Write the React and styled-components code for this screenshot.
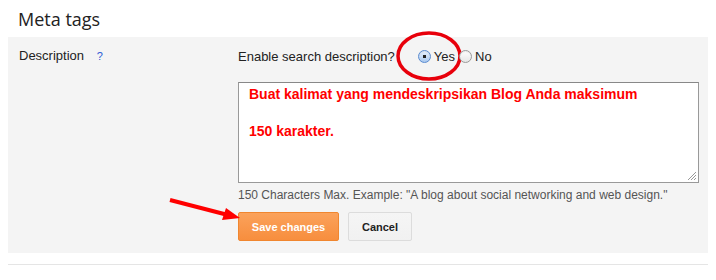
import React from 'react'
import styled, { createGlobalStyle } from 'styled-components'

const GlobalStyle = createGlobalStyle`
  body {
    margin: 0;
    background: #fff;
    font-family: "Liberation Sans", Arial, sans-serif;
  }
`

const App = () => {
    return (
        <Page>
            <GlobalStyle />
            <Title>Meta tags</Title>
            <Panel>
                <Label>
                    Description <Help>?</Help>
                </Label>
                <Field>
                    <Question>
                        <span>Enable search description?</span>
                        <Choice>
                            <Radio checked />
                            Yes
                            <Circle viewBox="0 0 68 52">
                                <ellipse cx="34" cy="26" rx="31" ry="23" fill="none" stroke="#e8000b" strokeWidth="3.5" />
                            </Circle>
                        </Choice>
                        <Choice>
                            <Radio />
                            No
                        </Choice>
                    </Question>
                    <TextBox>
                        <RedText>Buat kalimat yang mendeskripsikan Blog Anda maksimum</RedText>
                        <RedText />
                        <RedText>150 karakter.</RedText>
                        <Grip viewBox="0 0 10 10">
                            <path d="M1 9 L9 1 M4 9 L9 4 M7 9 L9 7" stroke="#999" strokeWidth="1" />
                        </Grip>
                    </TextBox>
                    <Hint>150 Characters Max. Example: "A blog about social networking and web design."</Hint>
                    <Buttons>
                        <Arrow viewBox="0 0 74 24">
                            <path d="M2 3 L60 18" stroke="#f00" strokeWidth="4" />
                            <polygon points="72,21 54,23 58,11" fill="#f00" />
                        </Arrow>
                        <Button primary>Save changes</Button>
                        <Button>Cancel</Button>
                    </Buttons>
                </Field>
            </Panel>
            <Rule />
        </Page>
    )
}

export default App

const Page = styled.div`
    width: 716px;
    height: 280px;
    padding: 0 8px;
    box-sizing: border-box;
`

const Title = styled.h2`
    margin: 0;
    padding: 4px 0 0 10px;
    height: 33px;
    font-family: "Open Sans", sans-serif;
    font-weight: 400;
    font-size: 18px;
    line-height: 30px;
    color: #222;
`

const Panel = styled.div`
    display: grid;
    grid-template-columns: 230px 1fr;
    background: #f4f4f4;
    padding: 9px 0 10px;
    height: 216px;
    box-sizing: border-box;
`

const Label = styled.div`
    padding: 2px 0 0 11px;
    font-size: 13px;
    color: #222;
`

const Help = styled.span`
    margin-left: 9px;
    font-size: 11px;
    color: #2c5bd5;
`

const Field = styled.div`
    display: flex;
    flex-direction: column;
`

const Question = styled.div`
    display: flex;
    align-items: center;
    height: 20px;
    font-size: 13px;
    color: #222;
    span {
        margin-right: 23px;
    }
`

const Choice = styled.label`
    position: relative;
    display: flex;
    align-items: center;
    gap: 3px;
    margin-right: 4px;
`

const Radio = styled.span`
    width: 13px;
    height: 13px;
    border-radius: 50%;
    box-sizing: border-box;
    border: 1px solid ${p => (p.checked ? '#5a8bd0' : '#9a9a9a')};
    background: ${p => (p.checked
        ? 'radial-gradient(circle, #222 0 1.6px, transparent 2px), linear-gradient(#e9f2fd, #a9c8ee)'
        : 'linear-gradient(#fff, #e6e6e6)')};
    box-shadow: inset 0 1px 1px rgba(0, 0, 0, 0.08);
    margin: 0 !important;
`

const Circle = styled.svg`
    position: absolute;
    left: -23px;
    top: 50%;
    transform: translateY(-50%);
    width: 68px;
    height: 52px;
    pointer-events: none;
`

const TextBox = styled.div`
    position: relative;
    margin-top: 16px;
    width: 461px;
    height: 101px;
    box-sizing: border-box;
    background: #fff;
    border: 1px solid #999;
    border-top-color: #888;
    padding: 2px 10px;
`

const RedText = styled.div`
    height: 18.5px;
    font-size: 14px;
    font-weight: 700;
    line-height: 18.5px;
    color: #f00;
`

const Grip = styled.svg`
    position: absolute;
    right: 1px;
    bottom: 1px;
    width: 10px;
    height: 10px;
`

const Hint = styled.div`
    margin-top: 5px;
    font-size: 12px;
    color: #555;
`

const Buttons = styled.div`
    position: relative;
    display: flex;
    gap: 9px;
    margin-top: 10px;
`

const Arrow = styled.svg`
    position: absolute;
    left: -70px;
    top: -15px;
    width: 74px;
    height: 24px;
`

const Button = styled.button`
    height: 29px;
    padding: 0;
    white-space: nowrap;
    border-radius: 2px;
    font-family: "Liberation Sans", Arial, sans-serif;
    font-size: 11px;
    font-weight: 700;
    color: ${p => (p.primary ? '#fff' : '#222')};
    background: ${p => (p.primary ? 'linear-gradient(#fba25b, #f78e3e)' : 'linear-gradient(#f5f5f5, #f1f1f1)')};
    border: 1px solid ${p => (p.primary ? '#f0862f' : '#dcdcdc')};
    width: ${p => (p.primary ? '101px' : '64px')};
`

const Rule = styled.div`
    margin-top: 11px;
    height: 1px;
    background: #e5e5e5;
`
